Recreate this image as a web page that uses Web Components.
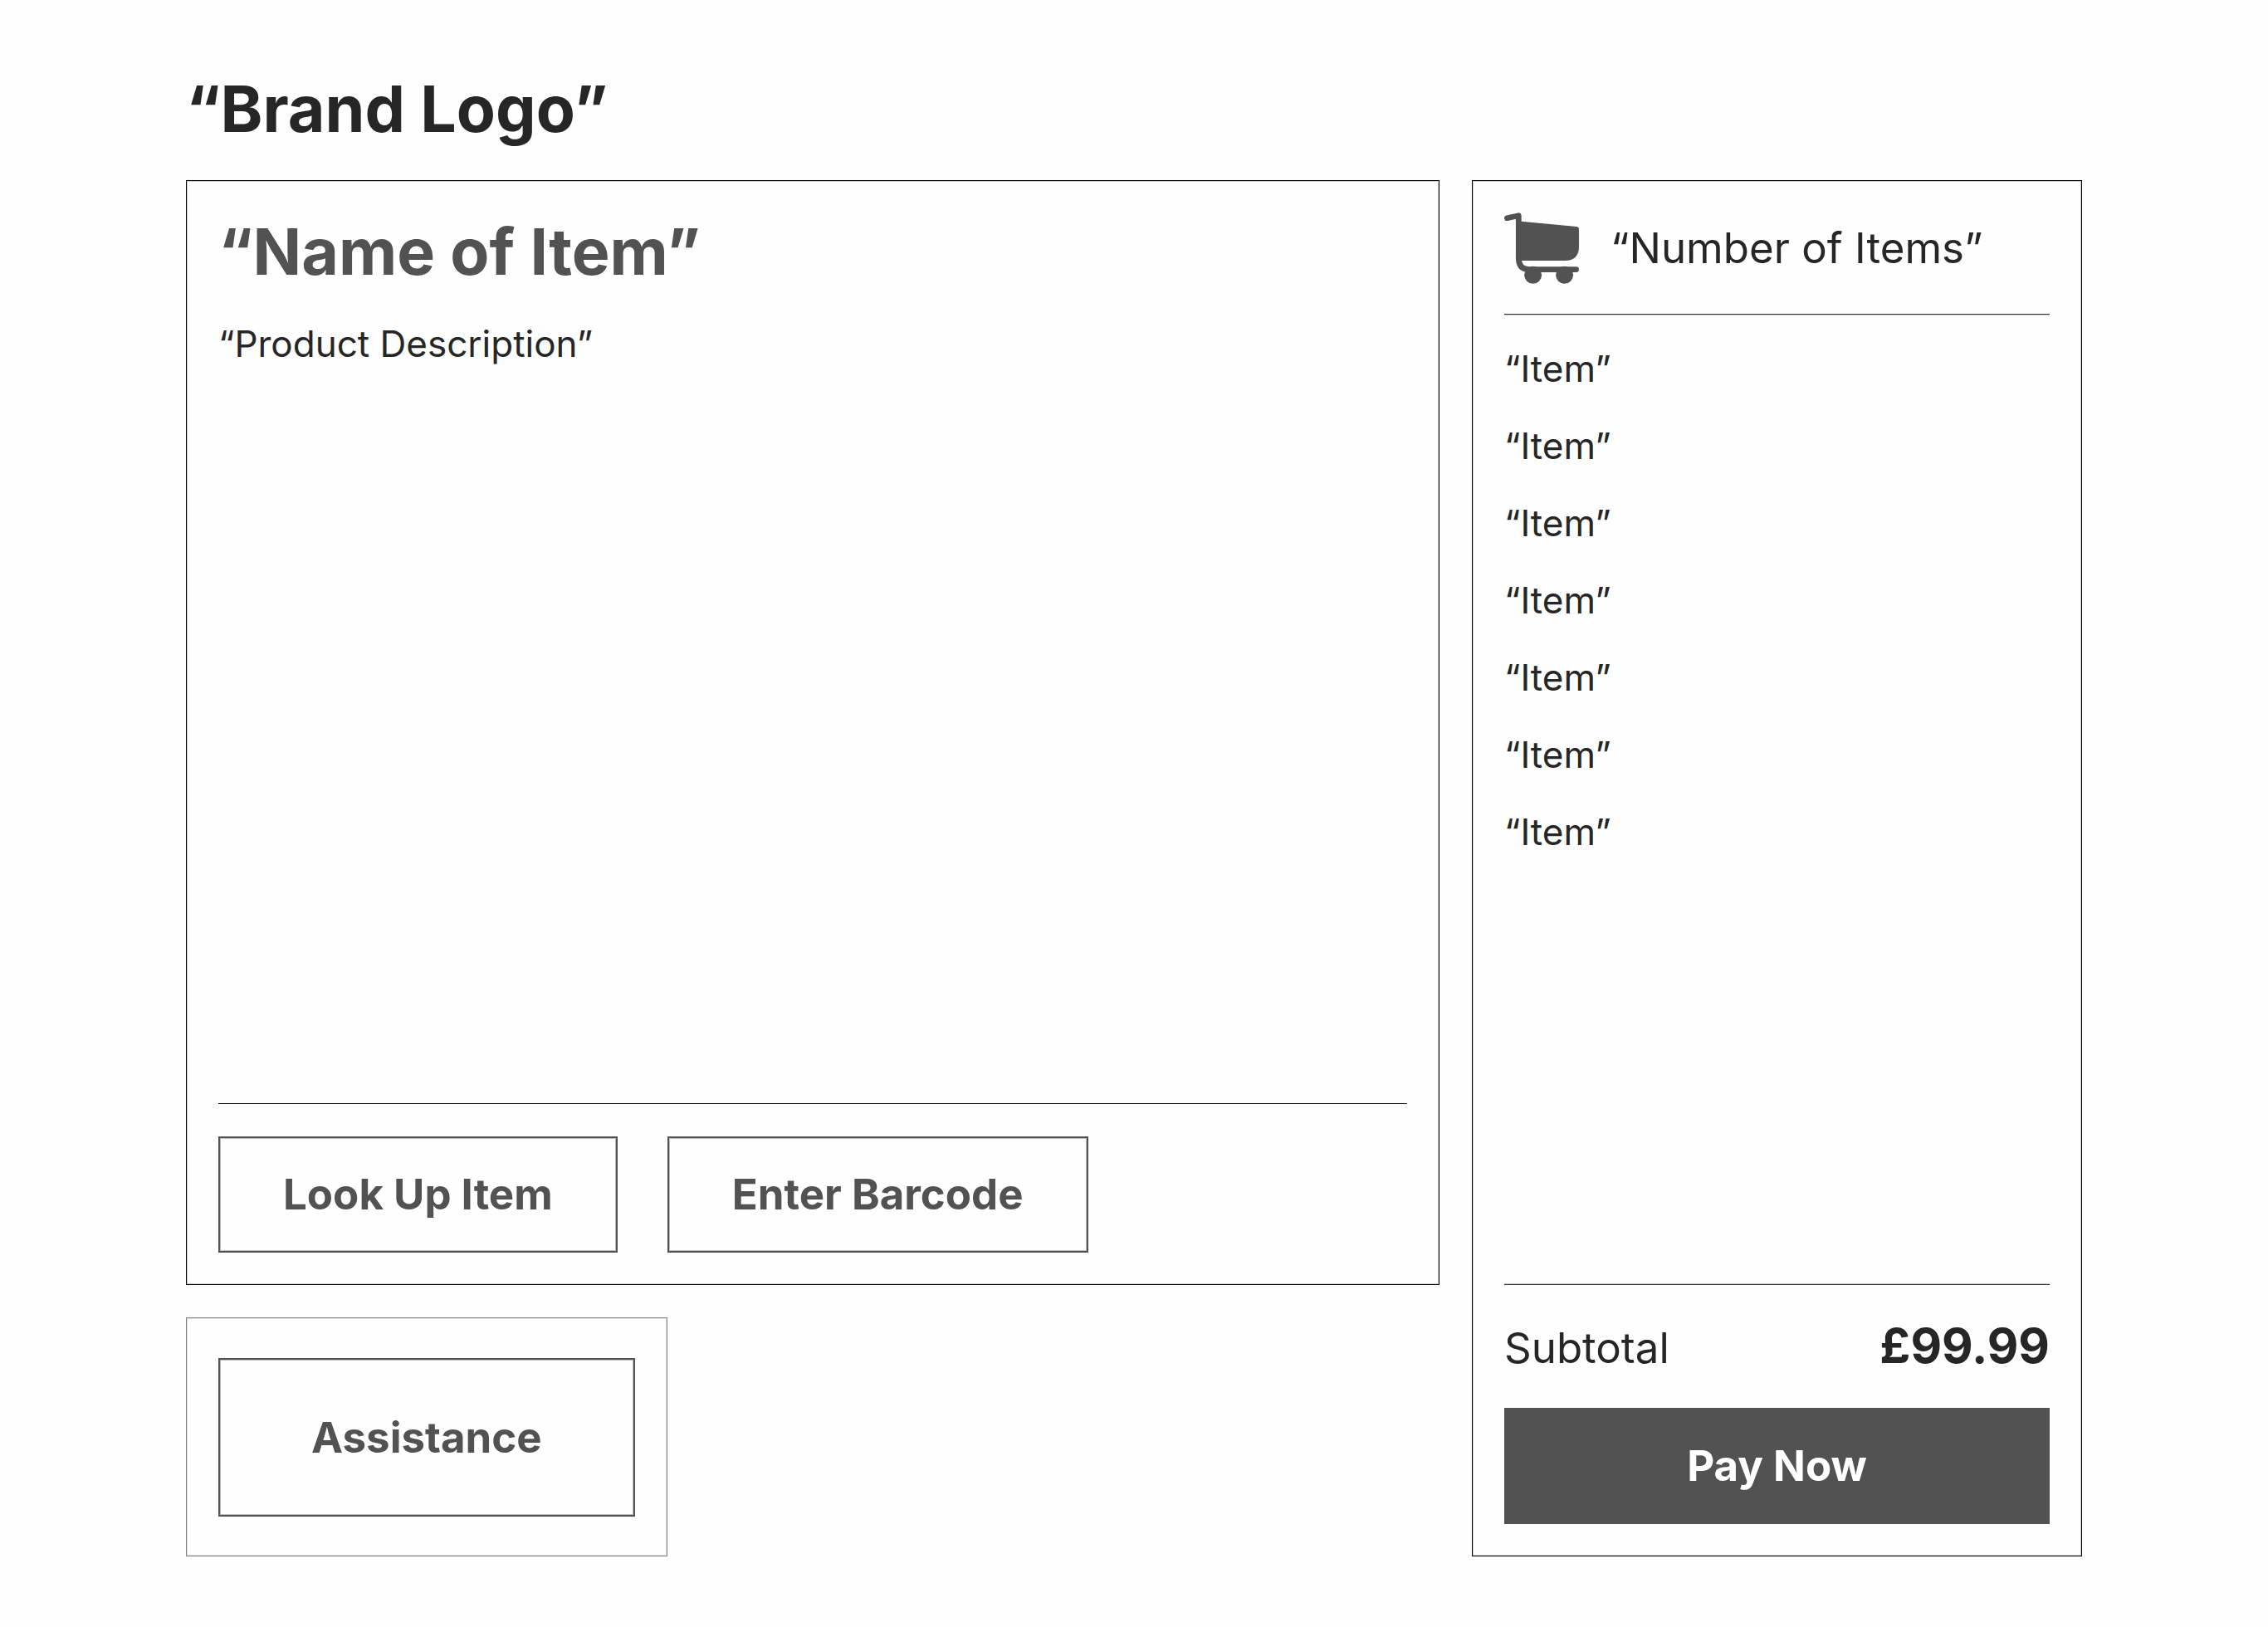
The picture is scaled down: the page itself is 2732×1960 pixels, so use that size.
<!DOCTYPE html>
<html lang="en">
<head>
<meta charset="utf-8">
<meta name="viewport" content="width=device-width, initial-scale=1">
<title>Self checkout</title>
<style>
  :root {
    --ink: #262626;
    --muted: #525252;
    --space: 39px;
    --title: 77px;
    --total: 58px;
    --label: 51px;
    --body: 44px;
  }
  body { margin: 0; background: #fefefe; color: var(--ink); font: 400 44px/54px Inter, "Liberation Sans", sans-serif; }
</style>
</head>
<body>
<checkout-screen>
  <span slot="brand">“Brand Logo”</span>
  <product-panel>
    <span slot="name">“Name of Item”</span>
    <span slot="description">“Product Description”</span>
    <outline-button slot="actions">Look Up Item</outline-button>
    <outline-button slot="actions">Enter Barcode</outline-button>
  </product-panel>
  <assistance-panel slot="help"><outline-button large>Assistance</outline-button></assistance-panel>
  <basket-panel slot="basket">
    <span slot="count">“Number of Items”</span>
    <basket-item>“Item”</basket-item>
    <basket-item>“Item”</basket-item>
    <basket-item>“Item”</basket-item>
    <basket-item>“Item”</basket-item>
    <basket-item>“Item”</basket-item>
    <basket-item>“Item”</basket-item>
    <basket-item>“Item”</basket-item>
    <span slot="total">£99.99</span>
  </basket-panel>
</checkout-screen>
<script>
const define = (name, markup) => {
  const template = document.createElement('template');
  template.innerHTML = markup;
  customElements.define(name, class extends HTMLElement {
    constructor() {
      super();
      this.attachShadow({ mode: 'open' }).append(template.content.cloneNode(true));
    }
  });
};

define('checkout-screen', `
  <style>
    :host { display: block; padding: 85px 224px 84px; }
    h1 { margin: 0 0 var(--space); font-size: var(--title); line-height: 93px; font-weight: 700; }
    main { display: grid; grid-template-columns: 1510fr 735fr; gap: var(--space); }
    .scan { display: flex; flex-direction: column; align-items: flex-start; gap: var(--space); }
    ::slotted(product-panel) { align-self: stretch; }
  </style>
  <header><h1><slot name="brand"></slot></h1></header>
  <main>
    <div class="scan"><slot></slot><slot name="help"></slot></div>
    <slot name="basket"></slot>
  </main>`);

define('product-panel', `
  <style>
    :host { display: flex; flex-direction: column; box-sizing: border-box; min-height: 1331px; padding: 38px; border: 1px solid #000; box-shadow: inset 0 0 0 1px #ccc; }
    h2 { margin: 0; color: var(--muted); font-size: var(--title); line-height: 95px; font-weight: 700; }
    p { margin: 36px 0 auto; font-size: var(--body); line-height: 54px; }
    hr { width: 100%; box-sizing: border-box; margin: 0 0 var(--space); border: 0; border-top: 1px solid #000; }
    .actions { display: flex; flex-wrap: wrap; gap: 60px; }
  </style>
  <h2><slot name="name"></slot></h2>
  <p><slot name="description"></slot></p>
  <hr>
  <div class="actions"><slot name="actions"></slot></div>`);

define('outline-button', `
  <style>
    :host { display: block; }
    button { display: block; box-sizing: border-box; min-height: 140px; padding: 0 76px; border: 2px solid var(--muted); border-radius: 0; box-shadow: inset 0 0 0 1px #bbb; background: none; color: var(--muted); font: inherit; font-size: var(--label); line-height: 62px; font-weight: 700; cursor: pointer; }
    :host([large]) button { min-height: 191px; padding: 0 110px; }
  </style>
  <button type="button"><slot></slot></button>`);

define('assistance-panel', `
  <style>
    :host { display: block; padding: 48px 38px 47px; border: 1px solid #808080; box-shadow: inset 0 0 0 1px #e0e0e0; }
  </style>
  <slot></slot>`);

define('cart-icon', `
  <style>
    :host { display: block; color: var(--muted); }
    svg { display: block; width: 90px; height: 86px; }
  </style>
  <svg viewBox="0 0 90 86" aria-hidden="true">
    <path d="M3.4 6.7 17.3 3.7V55Q17.3 68.6 30 68.6H86.6" fill="none" stroke="currentColor" stroke-width="6.7" stroke-linecap="round" stroke-linejoin="round"/>
    <path d="M18 10.6 87 17.1Q90 17.4 90 20.5V41Q90 58 73 58H18Z" fill="currentColor"/>
    <circle cx="34.6" cy="75.3" r="10.5" fill="currentColor"/>
    <circle cx="72.6" cy="75.3" r="10.5" fill="currentColor"/>
  </svg>`);

define('basket-item', `
  <style>:host { display: block; font-size: var(--body); line-height: 54px; }</style>
  <slot></slot>`);

define('basket-panel', `
  <style>
    :host { display: flex; flex-direction: column; box-sizing: border-box; padding: 38px; border: 1px solid #000; box-shadow: inset 0 0 0 1px #ccc; }
    header { display: flex; align-items: center; gap: 38px; padding-bottom: 36px; border-bottom: 1px solid #333; box-shadow: 0 1px #ccc; font-size: var(--label); line-height: 62px; }
    .items { display: flex; flex-direction: column; flex: 1; gap: var(--space); padding: 38px 0; }
    .total { display: flex; align-items: baseline; justify-content: space-between; padding: 38px 0 37px; border-top: 1px solid #333; box-shadow: 0 -1px #ccc; font-size: var(--label); line-height: 70px; }
    strong { font-size: var(--total); font-weight: 700; }
    button { min-height: 140px; padding: 0; border: 0; border-radius: 0; background: var(--muted); color: #fff; font: inherit; font-size: var(--label); line-height: 62px; font-weight: 700; cursor: pointer; }
  </style>
  <header><cart-icon></cart-icon><slot name="count"></slot></header>
  <div class="items"><slot></slot></div>
  <div class="total"><span>Subtotal</span><strong><slot name="total"></slot></strong></div>
  <button type="button">Pay Now</button>`);
</script>
</body>
</html>
